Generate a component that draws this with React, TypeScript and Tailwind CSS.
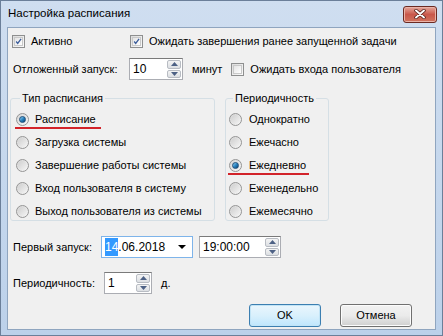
import React from "react";

function CheckBox({ checked }: { checked?: boolean }) {
  return (
    <span className="flex h-[13px] w-[13px] shrink-0 items-center justify-center border border-[#8e8f8f] bg-gradient-to-br from-[#dcdcdc] to-[#fbfbfb]">
      <span className="flex h-[9px] w-[9px] items-center justify-center border border-[#c9c9c9] bg-gradient-to-br from-[#e4e4e4] to-white">
        {checked && (
          <svg width="9" height="9" viewBox="0 0 9 9">
            <path d="M1.5 4.5 L3.5 7 L7.8 1.2" stroke="#3c5d9a" strokeWidth="1.7" fill="none" />
          </svg>
        )}
      </span>
    </span>
  );
}

function Radio({ checked }: { checked?: boolean }) {
  return (
    <span className="flex h-[13px] w-[13px] shrink-0 items-center justify-center rounded-full border border-[#959595] bg-gradient-to-br from-[#d6d6d6] to-[#f7f7f7]">
      {checked ? (
        <span className="h-[7px] w-[7px] rounded-full border border-[#1f4f7a] bg-gradient-to-br from-[#8fd0f3] via-[#2a86c2] to-[#0c3f73]" />
      ) : (
        <span className="h-[9px] w-[9px] rounded-full bg-gradient-to-br from-[#cfcfcf] to-[#f4f4f4]" />
      )}
    </span>
  );
}

function SpinButtons() {
  return (
    <div className="ml-auto flex h-full w-[16px] flex-col gap-px p-px">
      <div className="flex flex-1 items-center justify-center rounded-[2px] border border-[#b8bcc3] bg-gradient-to-b from-[#f4f4f4] to-[#dcdfe3]">
        <svg width="7" height="4" viewBox="0 0 7 4">
          <path d="M0 4 L3.5 0 L7 4 Z" fill="#4d6185" />
        </svg>
      </div>
      <div className="flex flex-1 items-center justify-center rounded-[2px] border border-[#b8bcc3] bg-gradient-to-b from-[#f4f4f4] to-[#dcdfe3]">
        <svg width="7" height="4" viewBox="0 0 7 4">
          <path d="M0 0 L7 0 L3.5 4 Z" fill="#4d6185" />
        </svg>
      </div>
    </div>
  );
}

function Spinner({ value, width }: { value: string; width: string }) {
  return (
    <div className={`flex h-[22px] items-center border border-[#abadb3] border-t-[#7a7a7a] bg-white ${width}`}>
      <span className="pl-[3px] text-[12px]">{value}</span>
      <SpinButtons />
    </div>
  );
}

export default function App() {
  const types = [
    "Расписание",
    "Загрузка системы",
    "Завершение работы системы",
    "Вход пользователя в систему",
    "Выход пользователя из системы",
  ];
  const periods = ["Однократно", "Ежечасно", "Ежедневно", "Еженедельно", "Ежемесячно"];

  return (
    <div
      className="flex h-[336px] w-[443px] flex-col border border-[#6b7f99] bg-gradient-to-b from-[#cfdef0] to-[#bcd1ea] text-[11px] text-black"
      style={{ fontFamily: '"Liberation Sans", Arial, sans-serif' }}
    >
      {/* Title bar */}
      <div className="flex h-[26px] shrink-0 items-center justify-between pl-[7px] pr-[5px]">
        <span className="text-[11.5px]">Настройка расписания</span>
        <div className="flex h-[17px] w-[34px] items-center justify-center rounded-[3px] border border-[#6b2a22] bg-gradient-to-b from-[#e3a79c] via-[#c9574a] to-[#d0735e] shadow-[inset_0_0_0_1px_#eab3a8]">
          <svg width="12" height="10" viewBox="0 0 12 10">
            <path d="M2 1.5 L10 8.5 M10 1.5 L2 8.5" stroke="#4a1812" strokeWidth="3.4" strokeLinecap="round" />
            <path d="M2 1.5 L10 8.5 M10 1.5 L2 8.5" stroke="white" strokeWidth="1.9" strokeLinecap="round" />
          </svg>
        </div>
      </div>

      {/* Body */}
      <div className="mx-[6px] mb-[5px] flex flex-1 flex-col border border-[#8fa5bf] bg-[#f0f0f0]">
        {/* Row 1 */}
        <div className="mt-[7px] flex h-[13px] items-center">
          <div className="ml-[4px] flex w-[118px] items-center gap-[6px]">
            <CheckBox checked />
            <span>Активно</span>
          </div>
          <div className="flex items-center gap-[6px]">
            <CheckBox checked />
            <span>Ожидать завершения ранее запущенной задачи</span>
          </div>
        </div>

        {/* Row 2 */}
        <div className="mt-[10px] flex items-center">
          <span className="ml-[5px] w-[116px]">Отложенный запуск:</span>
          <Spinner value="10" width="w-[54px]" />
          <span className="ml-[9px]">минут</span>
          <div className="ml-[9px] flex items-center gap-[6px]">
            <CheckBox />
            <span>Ожидать входа пользователя</span>
          </div>
        </div>

        {/* Groups */}
        <div className="mt-[11px] flex items-start">
          <fieldset className="ml-[2px] h-[130px] w-[205px] rounded-[3px] border border-[#d5dfe5] pl-[5px]">
            <legend className="ml-[4px] px-[2px] leading-[14px]">Тип расписания</legend>
            <div className="mt-[3px] flex flex-col">
              {types.map((t, i) => (
                <div key={t} className="relative flex h-[23px] items-center gap-[6px]">
                  <Radio checked={i === 0} />
                  <span>{t}</span>
                  {i === 0 && (
                    <span className="absolute left-[-1px] top-[19px] h-[2px] w-[86px] bg-[#d2232a]" />
                  )}
                </div>
              ))}
            </div>
          </fieldset>

          <fieldset className="ml-[10px] h-[130px] w-[104px] rounded-[3px] border border-[#d5dfe5] pl-[3px]">
            <legend className="ml-[4px] px-[2px] leading-[14px]">Периодичность</legend>
            <div className="mt-[3px] flex flex-col">
              {periods.map((p, i) => (
                <div key={p} className="relative flex h-[23px] items-center gap-[7px]">
                  <Radio checked={i === 2} />
                  <span>{p}</span>
                  {i === 2 && (
                    <span className="absolute left-[-1px] top-[19px] h-[2px] w-[81px] bg-[#d2232a]" />
                  )}
                </div>
              ))}
            </div>
          </fieldset>
        </div>

        {/* First run */}
        <div className="mt-[15px] flex items-center">
          <span className="ml-[5px] w-[88px]">Первый запуск:</span>
          <div className="flex h-[22px] w-[92px] items-center border border-[#7eb4ea] bg-white pl-[3px] text-[12px]">
            <span className="bg-[#3399ff] text-white">14</span>
            <span>.06.2018</span>
            <svg className="ml-auto mr-[6px]" width="8" height="4" viewBox="0 0 8 4">
              <path d="M0 0 L8 0 L4 4 Z" fill="black" />
            </svg>
          </div>
          <div className="ml-[6px]">
            <Spinner value="19:00:00" width="w-[82px]" />
          </div>
        </div>

        {/* Periodicity */}
        <div className="mt-[14px] flex items-center">
          <span className="ml-[5px] w-[91px]">Периодичность:</span>
          <Spinner value="1" width="w-[48px]" />
          <span className="ml-[9px]">д.</span>
        </div>

        {/* Buttons */}
        <div className="mt-auto mb-[2px] flex justify-end gap-[19px] pr-[23px]">
          <button className="h-[23px] w-[72px] rounded-[3px] border border-[#3c7fb1] bg-gradient-to-b from-[#eaf6fd] via-[#d9f0fc] to-[#bee6fd] shadow-[inset_0_0_0_1px_#c2e4f6]">
            OK
          </button>
          <button className="h-[23px] w-[72px] rounded-[3px] border border-[#707070] bg-gradient-to-b from-[#f2f2f2] via-[#ebebeb] to-[#cfcfcf] shadow-[inset_0_0_0_1px_#fcfcfc]">
            Отмена
          </button>
        </div>
      </div>
    </div>
  );
}
